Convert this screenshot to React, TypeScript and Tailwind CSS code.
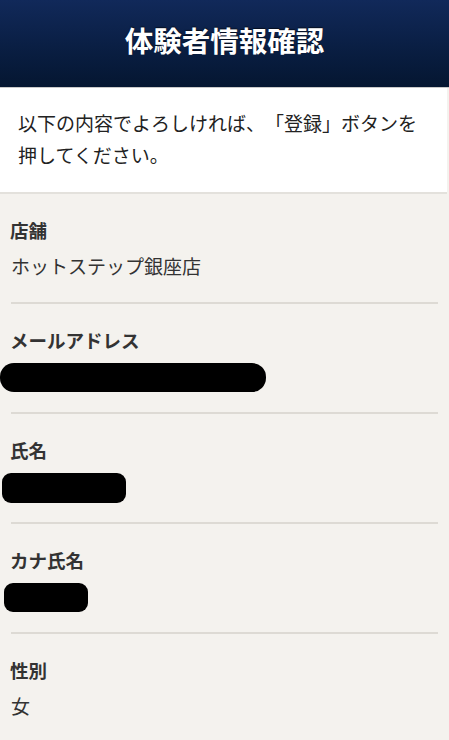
import React from "react";

const font = { fontFamily: '"Noto Sans CJK JP", "Noto Sans", sans-serif' };

function Section({ label, children }: { label: string; children: React.ReactNode }) {
  return (
    <div className="border-b-2 border-[#dddad4] mx-[11px] h-[110px] flex flex-col">
      <div className="pt-[23px] text-[18.5px] leading-[26px] font-bold text-[#333] -mx-px">{label}</div>
      <div className="mt-[8px] h-[30px] flex items-center -mx-[11px]">{children}</div>
    </div>
  );
}

export default function App() {
  return (
    <div className="w-[449px] h-[740px] overflow-hidden bg-[#f4f2ee] [text-spacing-trim:space-all]" style={font}>
      <div className="h-[87px] bg-gradient-to-b from-[#11295a] to-[#051631] flex items-center justify-center">
        <h1 className="text-white text-[28.5px] font-bold [text-shadow:0_-1px_1px_rgba(0,0,0,0.6)] -mt-[6px]">
          体験者情報確認
        </h1>
      </div>
      <div className="h-px bg-[#c9c9c9]" />
      <div className="bg-white border-b-2 border-[#e3e1dc] mr-[2px] pl-[18px] pr-3 pt-[19px] pb-[21px] text-[19px] leading-[32px] text-[#222] [text-spacing-trim:space-all]">
        以下の内容でよろしければ、「登録」ボタンを
        <br />
        押してください。
      </div>
      <div>
        <Section label="店舗">
          <span className="pl-[11px] text-[19px] text-[#333]">ホットステップ銀座店</span>
        </Section>
        <Section label="メールアドレス">
          <div className="mt-[3px] w-[266px] h-[29px] bg-black rounded-[14px]" />
        </Section>
        <Section label="氏名">
          <div className="mt-[3px] ml-[2px] w-[124px] h-[30px] bg-black rounded-[9px]" />
        </Section>
        <Section label="カナ氏名">
          <div className="mt-[3px] ml-[4px] w-[84px] h-[29px] bg-black rounded-[9px]" />
        </Section>
        <Section label="性別">
          <span className="pl-[11px] text-[19px] text-[#333]">女</span>
        </Section>
      </div>
    </div>
  );
}
